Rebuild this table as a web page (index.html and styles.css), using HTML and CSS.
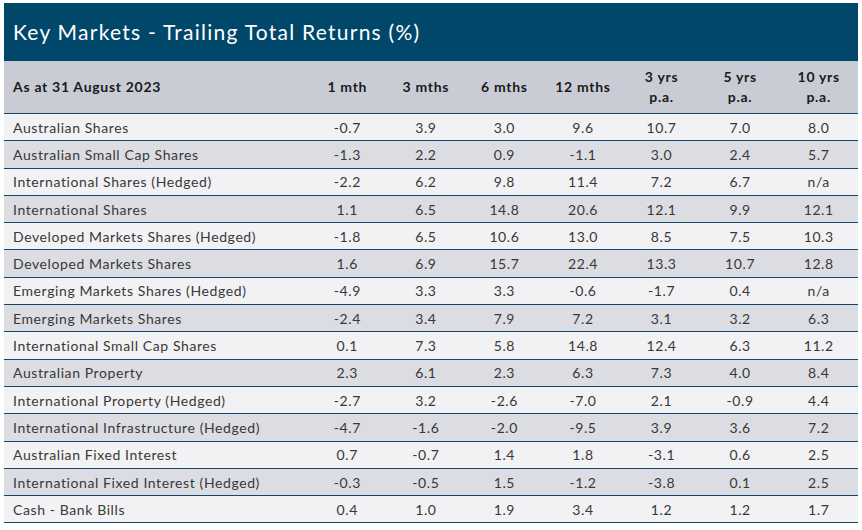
FILE: index.html
```html
<!DOCTYPE html>
<html>
<head>
<meta charset="utf-8">
<link rel="stylesheet" href="styles.css">
</head>
<body>
<div class="panel">
  <div class="title">Key Markets - Trailing Total Returns (%)</div>
  <table class="returns">
    <colgroup>
      <col class="c-name">
      <col class="c-num"><col class="c-num"><col class="c-num"><col class="c-num"><col class="c-num"><col class="c-num"><col class="c-num">
    </colgroup>
    <thead>
      <tr>
        <th class="name">As at 31 August 2023</th>
        <th>1 mth</th>
        <th>3 mths</th>
        <th>6 mths</th>
        <th>12 mths</th>
        <th>3 yrs<br>p.a.</th>
        <th>5 yrs<br>p.a.</th>
        <th>10 yrs<br>p.a.</th>
      </tr>
    </thead>
    <tbody>
      <tr><td class="name">Australian Shares</td><td>-0.7</td><td>3.9</td><td>3.0</td><td>9.6</td><td>10.7</td><td>7.0</td><td>8.0</td></tr>
      <tr><td class="name">Australian Small Cap Shares</td><td>-1.3</td><td>2.2</td><td>0.9</td><td>-1.1</td><td>3.0</td><td>2.4</td><td>5.7</td></tr>
      <tr><td class="name">International Shares (Hedged)</td><td>-2.2</td><td>6.2</td><td>9.8</td><td>11.4</td><td>7.2</td><td>6.7</td><td>n/a</td></tr>
      <tr><td class="name">International Shares</td><td>1.1</td><td>6.5</td><td>14.8</td><td>20.6</td><td>12.1</td><td>9.9</td><td>12.1</td></tr>
      <tr><td class="name">Developed Markets Shares (Hedged)</td><td>-1.8</td><td>6.5</td><td>10.6</td><td>13.0</td><td>8.5</td><td>7.5</td><td>10.3</td></tr>
      <tr><td class="name">Developed Markets Shares</td><td>1.6</td><td>6.9</td><td>15.7</td><td>22.4</td><td>13.3</td><td>10.7</td><td>12.8</td></tr>
      <tr><td class="name">Emerging Markets Shares (Hedged)</td><td>-4.9</td><td>3.3</td><td>3.3</td><td>-0.6</td><td>-1.7</td><td>0.4</td><td>n/a</td></tr>
      <tr><td class="name">Emerging Markets Shares</td><td>-2.4</td><td>3.4</td><td>7.9</td><td>7.2</td><td>3.1</td><td>3.2</td><td>6.3</td></tr>
      <tr><td class="name">International Small Cap Shares</td><td>0.1</td><td>7.3</td><td>5.8</td><td>14.8</td><td>12.4</td><td>6.3</td><td>11.2</td></tr>
      <tr><td class="name">Australian Property</td><td>2.3</td><td>6.1</td><td>2.3</td><td>6.3</td><td>7.3</td><td>4.0</td><td>8.4</td></tr>
      <tr><td class="name">International Property (Hedged)</td><td>-2.7</td><td>3.2</td><td>-2.6</td><td>-7.0</td><td>2.1</td><td>-0.9</td><td>4.4</td></tr>
      <tr><td class="name">International Infrastructure (Hedged)</td><td>-4.7</td><td>-1.6</td><td>-2.0</td><td>-9.5</td><td>3.9</td><td>3.6</td><td>7.2</td></tr>
      <tr><td class="name">Australian Fixed Interest</td><td>0.7</td><td>-0.7</td><td>1.4</td><td>1.8</td><td>-3.1</td><td>0.6</td><td>2.5</td></tr>
      <tr><td class="name">International Fixed Interest (Hedged)</td><td>-0.3</td><td>-0.5</td><td>1.5</td><td>-1.2</td><td>-3.8</td><td>0.1</td><td>2.5</td></tr>
      <tr><td class="name">Cash - Bank Bills</td><td>0.4</td><td>1.0</td><td>1.9</td><td>3.4</td><td>1.2</td><td>1.2</td><td>1.7</td></tr>
    </tbody>
  </table>
</div>
</body>
</html>
```

FILE: styles.css
```css
html, body {
  margin: 0;
  padding: 0;
  background: #ffffff;
}

body {
  font-family: "Lato", "Noto Sans", sans-serif;
  color: #383838;
}

.panel {
  margin: 3px 4px 0 4px;
  width: 854px;
}

.title {
  background: #00476a;
  color: #ffffff;
  height: 58px;
  box-sizing: border-box;
  padding: 16px 0 0 9px;
  font-size: 21px;
  line-height: 26px;
  letter-spacing: 1.25px;
}

.returns {
  width: 854px;
  border-collapse: collapse;
  table-layout: fixed;
}

.c-name {
  width: 304px;
}

.c-num {
  width: 78.57px;
}

.returns th {
  background: #c9ccd5;
  color: #1a1a1a;
  font-weight: 700;
  font-size: 14px;
  line-height: 20px;
  letter-spacing: 0.7px;
  height: 52px;
  padding: 0;
  text-align: center;
  vertical-align: middle;
  border-bottom: 1px solid #14456a;
}

.returns td {
  font-size: 14px;
  line-height: 17px;
  letter-spacing: 0.6px;
  height: 26.3px;
  padding: 0;
  text-align: center;
  vertical-align: middle;
  border-bottom: 1px solid #14456a;
}

.returns .name {
  text-align: left;
  padding-left: 9px;
}

.returns tbody tr:nth-child(odd) td {
  background: #f2f2f4;
}

.returns tbody tr:nth-child(even) td {
  background: #dcdde2;
}
```
